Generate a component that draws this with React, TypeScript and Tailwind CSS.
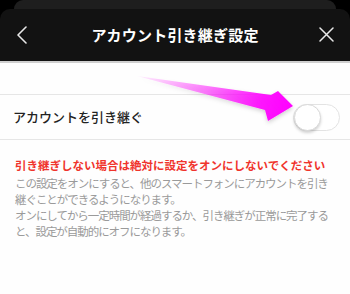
import React from "react";

const jp = { fontFamily: '"Noto Sans CJK JP", "Noto Sans", sans-serif' };

const Toggle = ({ on }: { on: boolean }) => (
  <div
    className={`relative w-[47px] h-[27px] rounded-full border ${
      on ? "bg-[#34c759] border-[#34c759]" : "bg-white border-[#e3e3e3]"
    }`}
  >
    <div className="absolute left-0 top-[-1px] w-[27px] h-[27px] rounded-full bg-white border border-[#d9d9d9] shadow-[0_2px_3px_rgba(0,0,0,0.18)]" />
  </div>
);

const PointerArrow = () => (
  <svg
    className="absolute inset-0 pointer-events-none"
    width="350"
    height="294"
    viewBox="0 0 350 294"
  >
    <defs>
      <linearGradient id="arrowFill" x1="137" y1="76" x2="293" y2="106" gradientUnits="userSpaceOnUse">
        <stop offset="0" stopColor="#ff00ff" stopOpacity="0.05" />
        <stop offset="0.45" stopColor="#ff00ff" stopOpacity="0.5" />
        <stop offset="0.8" stopColor="#ff00ff" stopOpacity="0.9" />
        <stop offset="1" stopColor="#ff00ff" stopOpacity="1" />
      </linearGradient>
      <filter id="arrowShadow" x="-10%" y="-30%" width="120%" height="160%">
        <feDropShadow dx="0" dy="2" stdDeviation="2" floodColor="#000" floodOpacity="0.2" />
      </filter>
    </defs>
    <polygon
      points="137,76 271,95 278,91 293,106 268,121 265,110"
      fill="url(#arrowFill)"
      filter="url(#arrowShadow)"
    />
  </svg>
);

export default function App() {
  return (
    <div className="relative w-[350px] h-[294px] bg-black overflow-hidden flex flex-col" style={jp}>
      <div className="mx-[14px] h-[9px] shrink-0 bg-[#1e1e1e] rounded-t-[9px]" />
      <div className="flex-1 flex flex-col bg-[#121212] rounded-t-[10px] overflow-hidden">
        <div className="relative h-[52px] shrink-0 flex items-center justify-center">
          <svg className="absolute left-[15px] top-[17px]" width="14" height="18" viewBox="0 0 14 18">
            <path d="M11 1 L3 9 L11 17" fill="none" stroke="#e8e8e8" strokeWidth="1.6" strokeLinecap="round" strokeLinejoin="round" />
          </svg>
          <h1 className="text-[15px] font-bold text-white tracking-[0.2px]">アカウント引き継ぎ設定</h1>
          <svg className="absolute right-[16px] top-[18px]" width="15" height="15" viewBox="0 0 15 15">
            <path d="M1 1 L14 14 M14 1 L1 14" fill="none" stroke="#e8e8e8" strokeWidth="1.5" strokeLinecap="round" />
          </svg>
        </div>
        <div className="h-[2px] shrink-0 bg-[#cfcfcf]" />
        <div className="flex-1 bg-[#fefefe] flex flex-col">
          <div className="h-[32px] border-b border-[#e6e6e6]" />
          <div className="h-[45px] flex items-center justify-between pl-[13px] pr-[10px] border-b border-[#e6e6e6]">
            <span className="text-[13px] font-medium text-[#222]">アカウントを引き継ぐ</span>
            <Toggle on={false} />
          </div>
          <div className="px-[15px] pt-[17px] leading-[16px]">
            <p className="text-[11.5px] font-bold text-[#f0342c] whitespace-nowrap">
              引き継ぎしない場合は絶対に設定をオンにしないでください
            </p>
            <p className="mt-[2px] text-[11.5px] text-[#9a9a9a] tracking-[-1.05px] whitespace-nowrap">
              この設定をオンにすると、他のスマートフォンにアカウントを引き
              <br />
              継ぐことができるようになります。
              <br />
              オンにしてから一定時間が経過するか、引き継ぎが正常に完了する
              <br />
              と、設定が自動的にオフになります。
            </p>
          </div>
        </div>
      </div>
      <PointerArrow />
    </div>
  );
}
